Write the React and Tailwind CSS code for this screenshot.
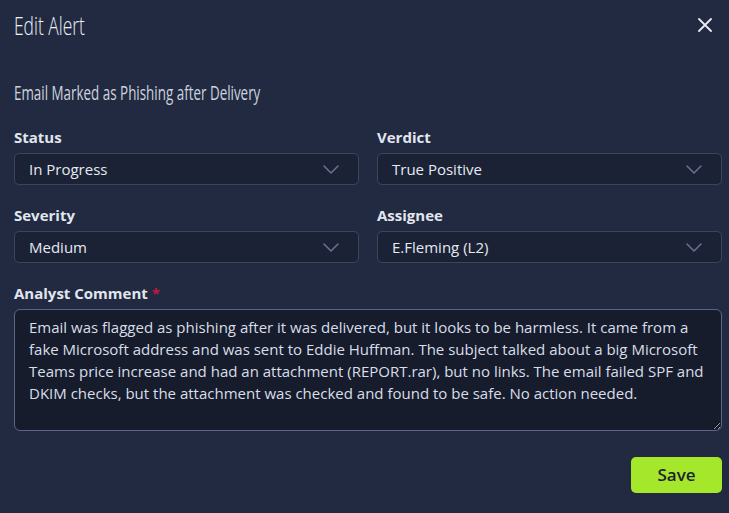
import React from "react";

function Chevron() {
  return (
    <svg width="16" height="9" viewBox="0 0 16 9" fill="none" className="shrink-0">
      <path d="M1 1l7 7 7-7" stroke="#66748f" strokeWidth="1.5" strokeLinecap="round" strokeLinejoin="round" />
    </svg>
  );
}

function Field({ label, value }) {
  return (
    <div className="flex flex-col gap-[6px]">
      <div className="text-[15px] leading-[20px] font-bold text-[#e2e6ee]">{label}</div>
      <div className="h-[32px] rounded-[5px] border border-[#3a4560] bg-[#1b2236] flex items-center justify-between pl-[14px] pr-[19px]">
        <span className="text-[15px] text-[#e6e9ef]">{value}</span>
        <Chevron />
      </div>
    </div>
  );
}

export default function App() {
  const comment =
    "Email was flagged as phishing after it was delivered, but it looks to be harmless. It came from a\nfake Microsoft address and was sent to Eddie Huffman. The subject talked about a big Microsoft\nTeams price increase and had an attachment (REPORT.rar), but no links. The email failed SPF and\nDKIM checks, but the attachment was checked and found to be safe. No action needed.";
  return (
    <div
      className="w-[729px] h-[513px] bg-[#212a41] pl-[14px] pr-[7px] pt-[8px] overflow-hidden"
      style={{ fontFamily: '"Open Sans", "Noto Sans", sans-serif' }}
    >
      <div className="flex items-center justify-between">
        <div className="inline-block origin-left scale-x-[0.67] text-[26px] leading-[34px] font-light text-[#eef1f6] whitespace-nowrap">Edit Alert</div>
        <svg width="14" height="14" viewBox="0 0 14 14" className="mr-[10px]">
          <path d="M1 1l12 12M13 1L1 13" stroke="#e8ebf1" strokeWidth="1.8" strokeLinecap="round" />
        </svg>
      </div>
      <div className="mt-[37px]">
        <div className="inline-block origin-left scale-x-[0.67] text-[20px] leading-[28px] text-[#cdd3de] whitespace-nowrap">Email Marked as Phishing after Delivery</div>
      </div>
      <div className="mt-[20px] grid grid-cols-2 gap-x-[18px] gap-y-[20px]">
        <Field label="Status" value="In Progress" />
        <Field label="Verdict" value="True Positive" />
        <Field label="Severity" value="Medium" />
        <Field label="Assignee" value="E.Fleming (L2)" />
      </div>
      <div className="mt-[20px] flex flex-col gap-[6px]">
        <div className="text-[15px] leading-[20px] font-bold text-[#e2e6ee]">
          Analyst Comment <span className="text-[#c2183f]">*</span>
        </div>
        <textarea
          readOnly
          defaultValue={comment}
          className="h-[122px] w-full rounded-[6px] border border-[#5a6680] bg-[#161c2c] px-[14px] pt-[6px] text-[15px] leading-[22px] text-[#d9dee8] outline-none"
          style={{ fontFamily: '"Open Sans", "Noto Sans", sans-serif' }}
        />
      </div>
      <div className="mt-[26px] flex justify-end">
        <button className="h-[36px] w-[91px] rounded-[5px] bg-[#a5e82b] text-[17px] font-semibold text-[#1c2232]">Save</button>
      </div>
    </div>
  );
}
